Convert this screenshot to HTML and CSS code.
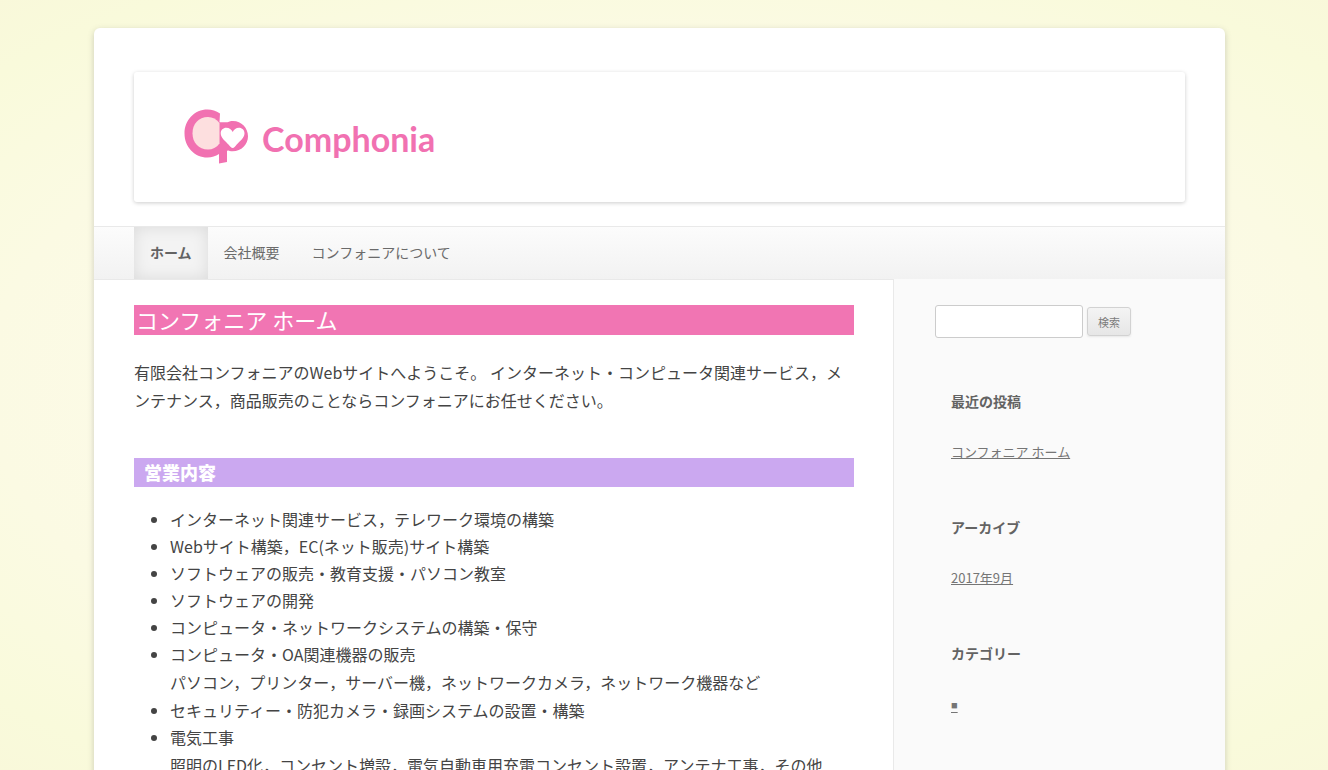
FILE: index.html
```html
<!DOCTYPE html>
<html lang="ja">
<head>
    <meta charset="UTF-8">
    <meta name="viewport" content="width=device-width, initial-scale=1.0">
    <title>コンフォニア ホーム</title>
    <link rel="stylesheet" href="styles.css">
</head>
<body>
    <div class="site">
        <header class="site-header">
            <a href="#" class="banner">
                <svg class="logo-mark" viewBox="0 0 64 56" aria-hidden="true">
                    <path fill="#f171b1" d="M36 4.500C32 2 28 .500 23.500 .500 10.500 .500 .500 11 .500 24.500S10.500 48.500 23.500 48.500c4.500 0 8-1.200 11.500-3.500v9.500l8-1.500V41.500c2 .600 3.500 .800 5.500 .800C57.500 42.300 64 35.500 64 27.300S57.500 12 49 12c-2 0-3.500 .300-5.500 1.200H35.500z"/>
                    <path fill="#fddfdf" d="M35.500 14C32.500 10 28.500 8 24 8 14.500 8 8.500 15 8.500 24.200S14.500 40.500 24 40.500c4.500 0 8.500-2 11.500-6z"/>
                    <path fill="#fff" d="M48.700 39c-1.500 0-2.500-1.700-4-3.300-3.200-3.700-8-6.700-8-11.500 0-3 2.500-5.400 5.500-5.400 3.200 0 5.200 1.700 6.500 4.200 1.300-2.500 3.300-4.200 6.300-4.200s5.500 2.400 5.500 5.400c0 4.800-4.800 7.800-8 11.500-1.400 1.600-2.400 3.300-3.800 3.300z"/>
                </svg>
                <span class="logo-text">Comphonia</span>
            </a>
        </header>

        <nav class="menu">
            <a href="#" class="current">ホーム</a>
            <a href="#">会社概要</a>
            <a href="#">コンフォニアについて</a>
        </nav>

        <div class="wrapper">
            <main class="content">
                <h1>コンフォニア ホーム</h1>
                <p>有限会社コンフォニアのWebサイトへようこそ。 インターネット・コンピュータ関連サービス，メンテナンス，商品販売のことならコンフォニアにお任せください。</p>
                <h2>営業内容</h2>
                <ul>
                    <li>インターネット関連サービス，テレワーク環境の構築</li>
                    <li>Webサイト構築，EC(ネット販売)サイト構築</li>
                    <li>ソフトウェアの販売・教育支援・パソコン教室</li>
                    <li>ソフトウェアの開発</li>
                    <li>コンピュータ・ネットワークシステムの構築・保守</li>
                    <li>コンピュータ・OA関連機器の販売
                        <div class="detail">パソコン，プリンター，サーバー機，ネットワークカメラ，ネットワーク機器など</div>
                    </li>
                    <li>セキュリティー・防犯カメラ・録画システムの設置・構築</li>
                    <li>電気工事
                        <div class="detail">照明のLED化，コンセント増設，電気自動車用充電コンセント設置，アンテナ工事，その他</div>
                    </li>
                </ul>
            </main>

            <aside class="sidebar">
                <form class="search" role="search">
                    <input type="text" aria-label="検索">
                    <button type="submit">検索</button>
                </form>
                <section class="widget">
                    <h3>最近の投稿</h3>
                    <a href="#">コンフォニア ホーム</a>
                </section>
                <section class="widget">
                    <h3>アーカイブ</h3>
                    <a href="#">2017年9月</a>
                </section>
                <section class="widget">
                    <h3>カテゴリー</h3>
                    <a href="#" class="mark">■</a>
                </section>
            </aside>
        </div>
    </div>
</body>
</html>
```
FILE: styles.css
```css
* {
    box-sizing: border-box;
}

html {
    height: 100%;
}

body {
    height: 100%;
    margin: 0;
    padding: 28px 103px 0 94px;
    overflow: hidden;
    background: radial-gradient(ellipse 85% 75% at center, #fffcf2 0%, #fbfae3 60%, #f9fadb 80%, #f9f6d9 100%);
    color: #444;
    font-family: "Noto Sans CJK JP", sans-serif;
    font-size: 16px;
    line-height: 27px;
}

.site {
    background-color: #fff;
    border-radius: 6px;
    box-shadow: 0 2px 6px rgba(100, 100, 100, 0.3);
    overflow: hidden;
}

.site-header {
    padding: 44px 40px 24px;
}

.banner {
    display: flex;
    align-items: center;
    gap: 14px;
    height: 130px;
    padding-left: 50px;
    border-radius: 3px;
    box-shadow: 0 1px 4px rgba(0, 0, 0, 0.2);
    text-decoration: none;
}

.logo-mark {
    width: 64px;
    height: 56px;
}

.logo-text {
    padding-top: 4px;
    color: #f171b1;
    font-family: Lato, sans-serif;
    font-size: 34px;
    font-weight: bold;
    line-height: 40px;
}

.menu {
    display: flex;
    padding: 0 40px;
    border-top: 1px solid #e9e9e9;
    background: linear-gradient(#fcfcfc, #f2f2f2);
}

.menu a {
    padding: 0 16px 2px;
    color: #6a6a6a;
    font-size: 14px;
    line-height: 50px;
    text-decoration: none;
}

.menu .current {
    background-color: #f3f3f3;
    box-shadow: inset 0 0 16px rgba(0, 0, 0, 0.1);
    color: #636363;
    font-weight: bold;
}

.wrapper {
    display: flex;
    min-height: 600px;
}

.content {
    flex: 1;
    padding: 25px 39px 0 40px;
    border-top: 1px solid #e9e9e9;
    border-right: 1px solid #e9e9e9;
}

.content h1 {
    margin: 0 0 23px;
    padding: 0 2px 2px;
    background-color: #f175b3;
    color: #fff;
    font-size: 22px;
    font-weight: normal;
    line-height: 28px;
}

.content p {
    margin: 0 0 44px;
    line-height: 28px;
}

.content h2 {
    margin: 0 0 19px;
    padding-left: 10px;
    background-color: #cba8f0;
    color: #fff;
    font-size: 18px;
    font-weight: 900;
    line-height: 29px;
}

.content ul {
    margin: 0;
    padding-left: 36px;
}

.detail {
    padding: 1px 0;
}

.sidebar {
    width: 331px;
    padding: 26px 41px 0;
    background-color: #fafafa;
    font-size: 13px;
}

.search {
    display: flex;
    align-items: center;
    gap: 4px;
    margin-bottom: 50px;
}

.search input {
    width: 148px;
    height: 33px;
    padding: 6px;
    border: 1px solid #ccc;
    border-radius: 3px;
}

.search button {
    height: 29px;
    padding: 0 10px;
    border: 1px solid #d2d2d2;
    border-radius: 3px;
    background: linear-gradient(#f4f4f4, #e6e6e6);
    box-shadow: 0 1px 2px rgba(64, 64, 64, 0.1);
    color: #7c7c7c;
    font-family: inherit;
    font-size: 11px;
}

.widget {
    margin-bottom: 49px;
    padding-left: 16px;
}

.widget h3 {
    margin: 0 0 23px;
    color: #636363;
    font-size: 14px;
    line-height: 27px;
}

.widget a {
    color: #757575;
}

.widget .mark {
    font-family: "Liberation Sans", sans-serif;
    font-size: 11px;
    text-underline-offset: 3px;
}
```
